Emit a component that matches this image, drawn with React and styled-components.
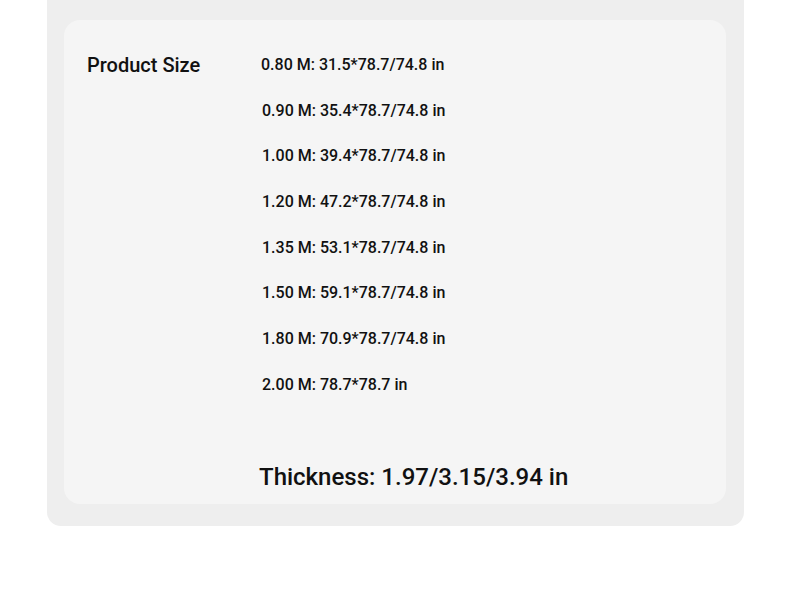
import React from "react";
import styled, { createGlobalStyle } from "styled-components";

const Global = createGlobalStyle`
  html, body {
    margin: 0;
    padding: 0;
    background: #ffffff;
  }
  body {
    font-family: Roboto, "Liberation Sans", sans-serif;
    color: #111111;
  }
`;

const Panel = styled.div`
  margin-left: 47px;
  width: 697px;
  box-sizing: border-box;
  background: #eeeeee;
  border-radius: 0 0 14px 14px;
  padding: 20px 18px 22px 17px;
`;

const Card = styled.div`
  background: #f5f5f5;
  border-radius: 16px;
  padding: 31px 23px 11px 23px;
`;

const SizeTable = styled.div`
  display: grid;
  grid-template-columns: 174px 1fr;
`;

const Label = styled.div`
  font-size: 20px;
  font-weight: 500;
  line-height: 30px;
  margin-top: -1px;
`;

const Rows = styled.div`
  display: flex;
  flex-direction: column;
  padding-top: 3px;
`;

const Row = styled.div`
  font-size: 16px;
  font-weight: 500;
  height: 45.7px;
  line-height: 22px;
  padding-left: ${(p) => p.$shift}px;
`;

const Thickness = styled.div`
  margin-top: 41px;
  padding-left: 172px;
  font-size: 24px;
  font-weight: 500;
  line-height: 32px;
`;

const sizes = [
  { text: "0.80 M: 31.5*78.7/74.8 in", shift: 0 },
  { text: "0.90 M: 35.4*78.7/74.8 in", shift: 1 },
  { text: "1.00 M: 39.4*78.7/74.8 in", shift: 1 },
  { text: "1.20 M: 47.2*78.7/74.8 in", shift: 1 },
  { text: "1.35 M: 53.1*78.7/74.8 in", shift: 1 },
  { text: "1.50 M: 59.1*78.7/74.8 in", shift: 1 },
  { text: "1.80 M: 70.9*78.7/74.8 in", shift: 1 },
  { text: "2.00 M: 78.7*78.7 in", shift: 1 },
];

export default function App() {
  return (
    <>
      <Global />
      <Panel>
        <Card>
          <SizeTable>
            <Label>Product Size</Label>
            <Rows>
              {sizes.map((s) => (
                <Row key={s.text} $shift={s.shift}>
                  {s.text}
                </Row>
              ))}
            </Rows>
          </SizeTable>
          <Thickness>Thickness: 1.97/3.15/3.94 in</Thickness>
        </Card>
      </Panel>
    </>
  );
}
